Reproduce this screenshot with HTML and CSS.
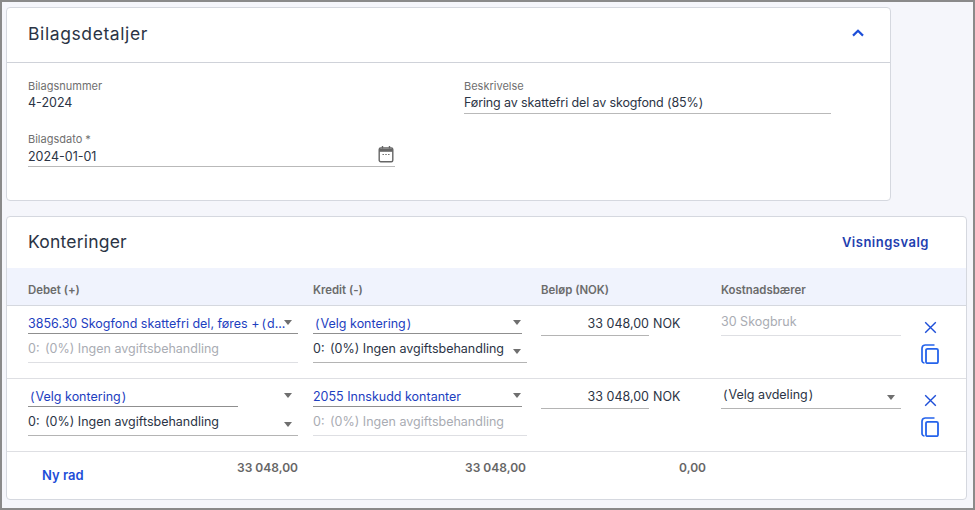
FILE: index.html
```html
<!DOCTYPE html>
<html lang="nb">
<head>
    <meta charset="UTF-8">
    <meta name="viewport" content="width=device-width, initial-scale=1.0">
    <title>Bilag</title>
    <link rel="stylesheet" href="styles.css">
</head>
<body>
    <div id="main">
        <section class="card" id="details">
            <div class="card-head details-head">
                <h2>Bilagsdetaljer</h2>
                <svg class="chevron" viewBox="0 0 12 8"><path d="M1 6.600 6 1.800l5 4.800" fill="none" stroke="#1d4ed8" stroke-width="2.200"/></svg>
            </div>
            <div class="details-body">
                <div class="info">
                    <label>Bilagsnummer</label>
                    <div class="value">4-2024</div>
                </div>
                <div class="info desc">
                    <label>Beskrivelse</label>
                    <div class="value lined desc-value">Føring av skattefri del av skogfond (85%)</div>
                </div>
                <div class="info date">
                    <label>Bilagsdato *</label>
                    <div class="value lined date-value">2024-01-01
                        <svg class="calendar" viewBox="0 0 16 17"><path d="M4.500 0v2.500M11.500 0v2.500" stroke="#666" stroke-width="1.400" fill="none"/><rect x="1.200" y="2" width="13.600" height="13.800" rx="1.500" fill="none" stroke="#666" stroke-width="1.400"/><path d="M1.200 3h13.600v2.800H1.200z" fill="#666"/><path d="M4.500 8.500h1.400M7.300 8.500h1.400M10.100 8.500h1.400" stroke="#666" stroke-width="1.200"/></svg>
                    </div>
                </div>
            </div>
        </section>

        <section class="card" id="entries">
            <div class="card-head entries-head">
                <h2>Konteringer</h2>
                <a class="link view-link">Visningsvalg</a>
            </div>
            <div class="grid table-head">
                <div>Debet (+)</div>
                <div>Kredit (-)</div>
                <div>Beløp (NOK)</div>
                <div>Kostnadsbærer</div>
                <div></div>
            </div>

            <div class="grid row">
                <div class="cell">
                    <div class="select blue">3856.30 Skogfond skattefri del, føres +<span class="par">(</span>d...<i class="caret wide"></i></div>
                    <div class="select sub off">0: <span class="par">(</span>0%<span class="par end">)</span> Ingen avgiftsbehandling</div>
                </div>
                <div class="cell">
                    <div class="select blue short">
                        <span class="par">(</span>Velg kontering<span class="par end">)</span><i class="caret"></i>
                    </div>
                    <div class="select sub">0: <span class="par">(</span>0%<span class="par end">)</span> Ingen avgiftsbehandling<i class="caret low wide"></i></div>
                </div>
                <div class="amount-cell">
                    <div class="amount">33 048,00</div>
                    <span class="nok">NOK</span>
                </div>
                <div class="cell">
                    <div class="select dept off">30 Skogbruk</div>
                </div>
                <div class="actions">
                    <svg class="icon-x" viewBox="0 0 14 14"><path d="M1.300 1.300l11.400 11.400M12.700 1.300 1.300 12.700" stroke="#1d4ed8" stroke-width="1.500" fill="none"/></svg>
                    <svg class="icon-copy" viewBox="0 0 18 20"><path d="M1 4.500v12a2.500 2.500 0 0 0 2.500 2.500M4 1h9.500M1 4.500A3.500 3.500 0 0 1 4 1" fill="none" stroke="#2563eb" stroke-width="1.700"/><rect x="5" y="4.800" width="12" height="14.400" rx="1.500" fill="none" stroke="#2563eb" stroke-width="1.800"/></svg>
                </div>
            </div>

            <div class="grid row">
                <div class="cell">
                    <div class="select blue gap-line"><span class="narrow-line"><span class="par">(</span>Velg kontering<span class="par end">)</span></span><i class="caret wide"></i></div>
                    <div class="select sub">0: <span class="par">(</span>0%<span class="par end">)</span> Ingen avgiftsbehandling<i class="caret low wide"></i></div>
                </div>
                <div class="cell">
                    <div class="select blue short">2055 Innskudd kontanter<i class="caret"></i></div>
                    <div class="select sub off">0: <span class="par">(</span>0%<span class="par end">)</span> Ingen avgiftsbehandling</div>
                </div>
                <div class="amount-cell">
                    <div class="amount">33 048,00</div>
                    <span class="nok">NOK</span>
                </div>
                <div class="cell">
                    <div class="select dept"><span class="par">(</span>Velg avdeling<span class="par end">)</span><i class="caret low wide"></i></div>
                </div>
                <div class="actions">
                    <svg class="icon-x" viewBox="0 0 14 14"><path d="M1.300 1.300l11.400 11.400M12.700 1.300 1.300 12.700" stroke="#1d4ed8" stroke-width="1.500" fill="none"/></svg>
                    <svg class="icon-copy" viewBox="0 0 18 20"><path d="M1 4.500v12a2.500 2.500 0 0 0 2.500 2.500M4 1h9.500M1 4.500A3.500 3.500 0 0 1 4 1" fill="none" stroke="#2563eb" stroke-width="1.700"/><rect x="5" y="4.800" width="12" height="14.400" rx="1.500" fill="none" stroke="#2563eb" stroke-width="1.800"/></svg>
                </div>
            </div>

            <div class="grid totals">
                <div class="total-first"><a class="link">Ny rad</a><b>33 048,00</b></div>
                <div class="total-second"><b>33 048,00</b></div>
                <div class="total-third"><b>0,00</b></div>
                <div></div>
                <div></div>
            </div>
        </section>
    </div>
</body>
</html>
```

FILE: styles.css
```css
*{
    margin: 0;
    padding: 0;
    box-sizing: border-box;
    font-family: "Inter", sans-serif;
}
html,body{
    width: 100%;
    height: 100%;
}
#main{
    width: 975px;
    height: 510px;
    background-color: #f5f6fb;
    border: 2px solid #8a8a8a;
    padding: 5px 6px 0 4px;
    color: #2b3445;
    overflow: hidden;
}
.card{
    background-color: #fff;
    border: 1px solid #d5d8df;
    border-radius: 4px;
}
#details{
    width: 885px;
    height: 194px;
}
#entries{
    width: 961px;
    height: 284px;
    margin-top: 15px;
}
.card-head{
    display: flex;
    justify-content: space-between;
    align-items: center;
    padding: 0 21px;
}
.card-head h2{
    font-size: 17.500px;
    font-weight: 400;
    letter-spacing: 0.200px;
}
.details-head{
    height: 55px;
    border-bottom: 1px solid #cfd2d9;
    padding-right: 26px;
    padding-bottom: 4px;
}
.details-head h2{
    letter-spacing: 0.600px;
}
.chevron{
    width: 12px;
    height: 8px;
}
.details-body{
    display: grid;
    grid-template-columns: 436px 367px;
    grid-auto-rows: 53px;
    padding: 16px 0 0 21px;
}
.info label{
    display: block;
    font-size: 11px;
    line-height: 14px;
    color: #6f6f6f;
}
.value{
    font-size: 12.500px;
    line-height: 20px;
    height: 21px;
}
.desc-value{
    letter-spacing: -0.120px;
}
.lined{
    border-bottom: 1px solid #b9b9b9;
}
.date{
    width: 367px;
}
.date-value{
    display: flex;
    justify-content: space-between;
    padding-right: 1px;
    line-height: 22px;
}
.calendar{
    width: 16px;
    height: 17px;
}
.link{
    color: #1d4ed8;
    font-weight: 600;
    font-size: 13px;
}
.view-link{
    color: #1e40af;
    letter-spacing: 0.500px;
    padding-right: 16px;
}
.entries-head{
    height: 51px;
    padding-bottom: 2px;
}
.grid{
    display: grid;
    grid-template-columns: 285px 228px 180px 190px 1fr;
    padding-left: 21px;
}
.table-head{
    background-color: #f0f3fd;
    height: 38px;
    border-bottom: 1px solid #d5d8df;
    align-items: center;
    font-size: 11.400px;
    font-weight: 600;
    color: #6b6b6b;
    padding-top: 6px;
}
.row{
    height: 73px;
    border-bottom: 1px solid #dedfe3;
    padding-top: 6px;
}
.select{
    position: relative;
    width: 270px;
    height: 22px;
    font-size: 12.500px;
    line-height: 24px;
    border-bottom: 1px solid #8f8f8f;
    white-space: nowrap;
}
.par{
    margin: 0 1px 0 2px;
}
.par.end{
    margin: 0 1px;
}
.sub{
    width: 214px;
    height: 29px;
    line-height: 30px;
    border-bottom-color: #b4b4b4;
}
.sub .par{
    margin: 0 0 0 2px;
}
.sub .par.end{
    margin: 0;
}
.cell:first-child .sub{
    width: 270px;
}
.short{
    width: 209px;
}
.blue{
    color: #1d40c0;
}
.gap-line{
    border-bottom: none;
}
.narrow-line{
    display: block;
    width: 210px;
    height: 22px;
    border-bottom: 1px solid #8f8f8f;
}
.dept{
    width: 180px;
    height: 24px;
    line-height: 20px;
    border-bottom-color: #b4b4b4;
}
.off{
    color: #a9acb3;
    border-bottom-color: #dedfe3;
}
.caret{
    position: absolute;
    right: 1px;
    top: 8px;
    border-left: 4px solid transparent;
    border-right: 4px solid transparent;
    border-top: 5px solid #6f6f6f;
}
.caret.wide{
    right: 6px;
}
.caret.low{
    top: 15px;
}
.dept .caret.low{
    top: 10px;
}
.amount-cell{
    display: flex;
    align-items: flex-start;
}
.amount{
    width: 108px;
    height: 24px;
    line-height: 24px;
    font-size: 12.500px;
    text-align: right;
    border-bottom: 1px solid #b4b4b4;
}
.nok{
    font-size: 12.500px;
    line-height: 24px;
    margin-left: 4px;
}
.actions{
    display: flex;
    flex-direction: column;
    align-items: flex-start;
    padding: 9px 0 0 10px;
}
.icon-x{
    width: 13px;
    height: 13px;
    margin-left: 3px;
}
.icon-copy{
    width: 18px;
    height: 20px;
    margin-top: 10px;
}
.totals{
    height: 47px;
    padding-top: 8px;
    font-size: 12px;
    color: #666;
}
.totals b{
    font-weight: 600;
}
.total-first{
    width: 270px;
    display: flex;
    justify-content: space-between;
    align-items: flex-start;
    padding-left: 14px;
}
.total-first .link{
    margin-top: 7px;
}
.total-second{
    width: 213px;
    text-align: right;
}
.total-third{
    width: 165px;
    text-align: right;
}
```
